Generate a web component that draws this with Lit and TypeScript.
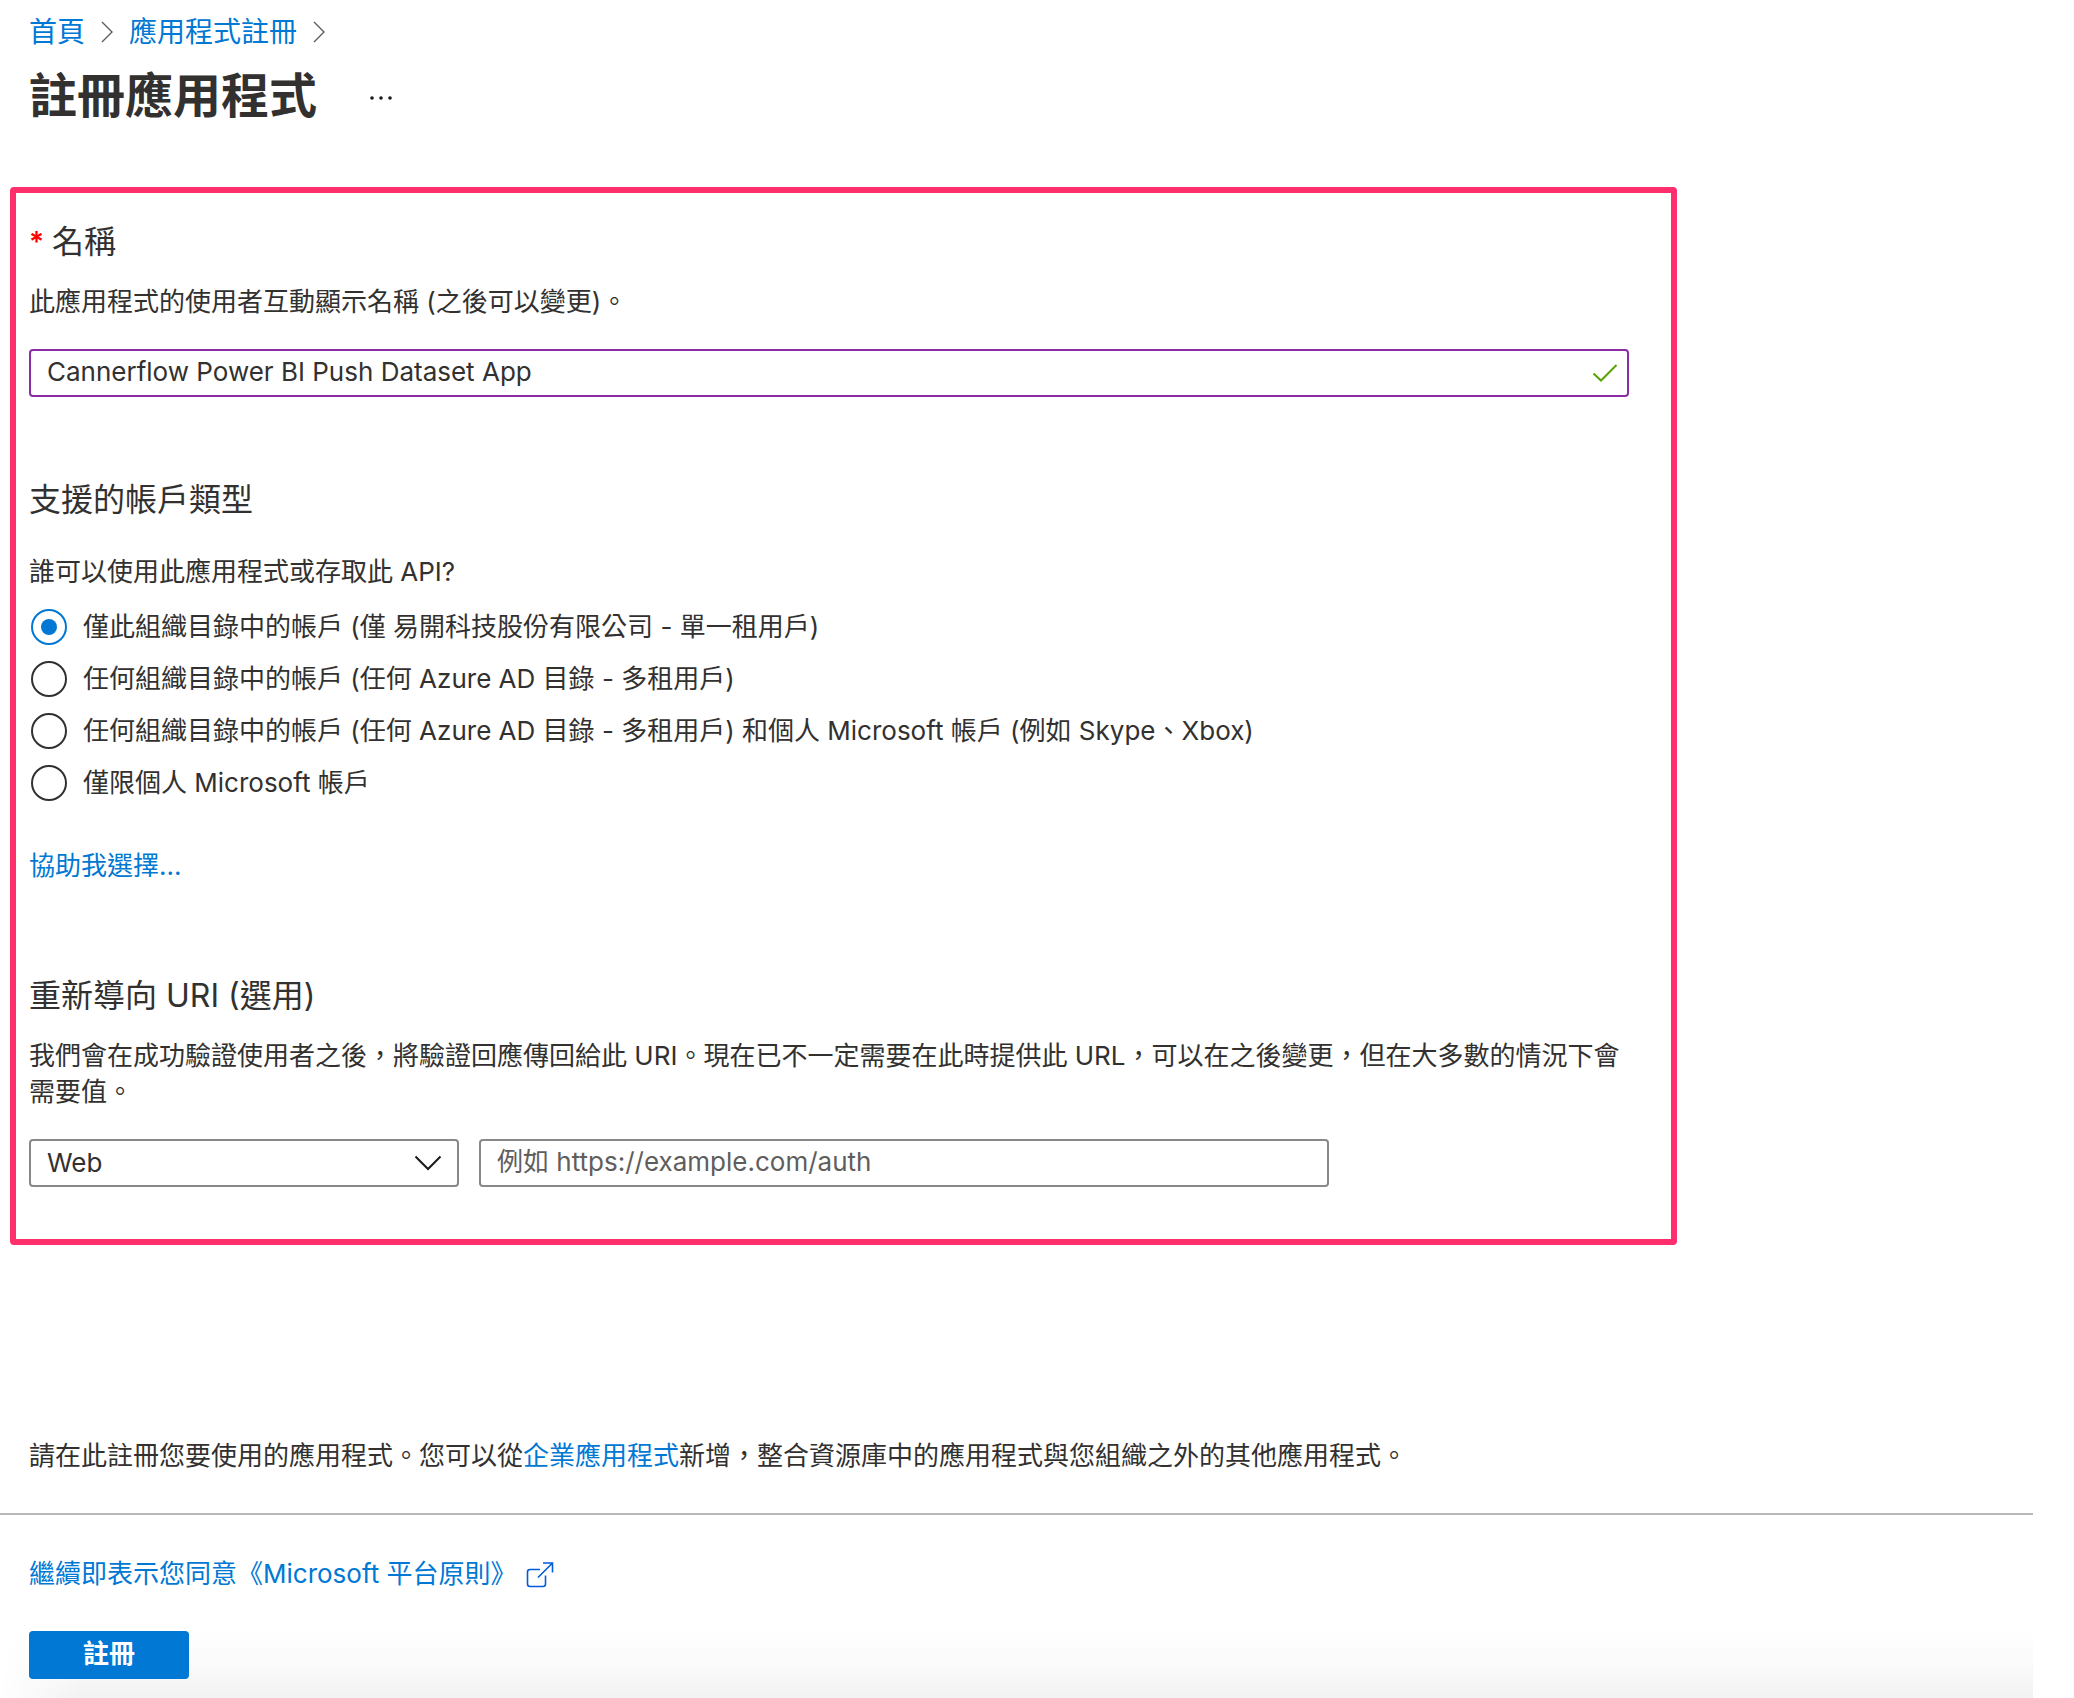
import { LitElement, html, css } from "lit";
import { customElement, state } from "lit/decorators.js";

const ACCOUNT_TYPES = [
  "僅此組織目錄中的帳戶 (僅 易開科技股份有限公司 - 單一租用戶)",
  "任何組織目錄中的帳戶 (任何 Azure AD 目錄 - 多租用戶)",
  "任何組織目錄中的帳戶 (任何 Azure AD 目錄 - 多租用戶) 和個人 Microsoft 帳戶 (例如 Skype、Xbox)",
  "僅限個人 Microsoft 帳戶",
];

const crumbChevron = html`<svg class="crumb-chevron" viewBox="0 0 12 22" aria-hidden="true">
  <path d="M1 1l10 10L1 21" fill="none" stroke="#605e5c" stroke-width="1.4" />
</svg>`;

@customElement("app-root")
export class AppRoot extends LitElement {
  @state() private accountType = 0;

  static styles = css`
    :host {
      display: block;
      min-height: 100vh;
      background: #fff;
      color: #323130;
      font-family: Inter, "Noto Sans CJK TC", sans-serif;
      font-size: 26px;
      line-height: 36px;
    }
    *, *::before, *::after { box-sizing: border-box; }
    h1, h2, p, fieldset, legend { margin: 0; padding: 0; border: 0; }
    a { color: #0078d4; text-decoration: none; }
    input, select, button { font: inherit; color: inherit; margin: 0; }
    .page {
      display: flex;
      flex-direction: column;
      min-height: 100vh;
    }
    .top { padding: 14px 29px 0; }
    .crumbs {
      display: flex;
      align-items: center;
      gap: 16px;
      font-size: 28px;
    }
    .crumb-chevron { width: 12px; height: 22px; }
    .title-row {
      display: flex;
      align-items: center;
      gap: 44px;
      margin-top: 10px;
    }
    h1 { font-size: 48px; line-height: 72px; font-weight: 700; }
    .more {
      display: flex;
      padding: 12px 8px 8px;
      border: 0;
      background: none;
    }
    .more svg { width: 24px; height: 8px; }
    .frame {
      max-width: 1667px;
      margin: 55px 10px 0;
      padding: 29px 42px 52px 13px;
      border: 6px solid #ff2e6c;
      border-radius: 4px;
    }
    h2 { font-size: 32px; line-height: 40px; font-weight: 400; }
    .name-title { display: flex; gap: 8px; }
    .required { color: #f00; font-size: 28px; font-weight: 600; }
    .hint { margin-top: 22px; }
    .field {
      width: 100%;
      height: 48px;
      padding: 0 16px 3px;
      border: 2px solid #8a8886;
      border-radius: 4px;
      background: #fff;
      outline: 0;
    }
    .field::placeholder { color: #605e5c; opacity: 1; }
    .name { position: relative; margin-top: 29px; }
    .name .field { border-color: #8a2da5; padding-right: 52px; }
    .tick {
      position: absolute;
      right: 11px;
      top: 14px;
      width: 26px;
      height: 20px;
    }
    .types-title { margin-top: 83px; }
    .question-group { margin-top: 34px; }
    .types { display: grid; margin-top: 11px; }
    .type { display: flex; align-items: center; gap: 16px; min-height: 52px; }
    .type input {
      appearance: none;
      flex: none;
      display: grid;
      place-items: center;
      width: 36px;
      height: 36px;
      margin-left: 2px;
      border: 2px solid #323130;
      border-radius: 50%;
    }
    .type input:checked { border-color: #0078d4; }
    .type input:checked::before {
      content: "";
      width: 16px;
      height: 16px;
      border-radius: 50%;
      background: #0078d4;
    }
    .help { margin-top: 39px; }
    .redirect-title { margin-top: 92px; }
    .redirect { display: flex; gap: 20px; margin-top: 29px; }
    .platform { position: relative; flex: 0 1 430px; }
    .platform select { appearance: none; padding-bottom: 0; }
    .platform svg {
      position: absolute;
      right: 17px;
      top: 16px;
      width: 28px;
      height: 16px;
      pointer-events: none;
    }
    .uri { flex: 0 1 850px; }
    .note { margin-top: 193px; padding: 0 29px 39px; }
    .footer {
      flex: 1;
      margin-right: 41px;
      padding: 41px 29px 19px;
      border-top: 2px solid #b9b8b7;
      background:
        linear-gradient(90deg, #fff, #fff0 80px),
        linear-gradient(0deg, #f2f2f2, #fafafa 32px, #fff 72px);
    }
    .terms { display: inline-flex; align-items: center; gap: 10px; }
    .terms svg { width: 28px; height: 28px; }
    .submit {
      display: block;
      width: 160px;
      height: 48px;
      margin-top: 39px;
      padding: 0 0 3px;
      border: 0;
      border-radius: 4px;
      background: #0078d4;
      color: #fff;
      font-weight: 700;
    }
  `;

  render() {
    return html`
      <form class="page" lang="zh-Hant" @submit=${(e: Event) => e.preventDefault()}>
        <header class="top">
          <nav class="crumbs">
            <a href="#home">首頁</a>${crumbChevron}
            <a href="#registrations">應用程式註冊</a>${crumbChevron}
          </nav>
          <div class="title-row">
            <h1>註冊應用程式</h1>
            <button class="more" type="button" aria-label="更多">
              <svg viewBox="0 0 24 8" fill="#1b1a19" aria-hidden="true">
                <circle cx="3" cy="4" r="1.8" /><circle cx="12" cy="4" r="1.8" /><circle cx="21" cy="4" r="1.8" />
              </svg>
            </button>
          </div>
        </header>

        <main class="frame">
          <h2 class="name-title"><span class="required">*</span><label for="name">名稱</label></h2>
          <p class="hint">此應用程式的使用者互動顯示名稱 (之後可以變更)。</p>
          <div class="name">
            <input class="field" id="name" type="text" required .value=${"Cannerflow Power BI Push Dataset App"} />
            <svg class="tick" viewBox="0 0 26 20" aria-hidden="true">
              <path d="M1.5 10.5L9 17.5L24.5 2" fill="none" stroke="#57a300" stroke-width="2" />
            </svg>
          </div>

          <h2 class="types-title">支援的帳戶類型</h2>
          <fieldset class="question-group">
            <legend>誰可以使用此應用程式或存取此 API?</legend>
            <div class="types">
              ${ACCOUNT_TYPES.map(
                (text, i) => html`<label class="type">
                  <input
                    type="radio"
                    name="account"
                    .checked=${this.accountType === i}
                    @change=${() => (this.accountType = i)}
                  /><span>${text}</span>
                </label>`
              )}
            </div>
          </fieldset>
          <p class="help"><a href="#help">協助我選擇...</a></p>

          <h2 class="redirect-title">重新導向 URI (選用)</h2>
          <p class="hint">
            我們會在成功驗證使用者之後，將驗證回應傳回給此 URI。現在已不一定需要在此時提供此 URL，可以在之後變更，但在大多數的情況下會需要值。
          </p>
          <div class="redirect">
            <div class="platform">
              <select class="field" aria-label="平台">
                <option>Web</option>
              </select>
              <svg viewBox="0 0 28 16" aria-hidden="true">
                <path d="M1.5 1.5L14 14L26.5 1.5" fill="none" stroke="#1b1a19" stroke-width="2" />
              </svg>
            </div>
            <input class="field uri" type="url" aria-label="重新導向 URI" placeholder="例如 https://example.com/auth" />
          </div>
        </main>

        <p class="note">
          請在此註冊您要使用的應用程式。您可以從<a href="#enterprise">企業應用程式</a>新增，整合資源庫中的應用程式與您組織之外的其他應用程式。
        </p>

        <footer class="footer">
          <a class="terms" href="#terms"
            >繼續即表示您同意《Microsoft 平台原則》<svg viewBox="0 0 28 28" aria-hidden="true">
              <path
                d="M14 9.5H4A2.5 2.5 0 0 0 1.5 12V24A2.5 2.5 0 0 0 4 26.5H17A2.5 2.5 0 0 0 19.5 24V15.5M17 3H26.5V12.5M26.5 3L12 17.5"
                fill="none" stroke="#015cda" stroke-width="1.6" /></svg
          ></a>
          <button class="submit" type="submit">註冊</button>
        </footer>
      </form>
    `;
  }
}
